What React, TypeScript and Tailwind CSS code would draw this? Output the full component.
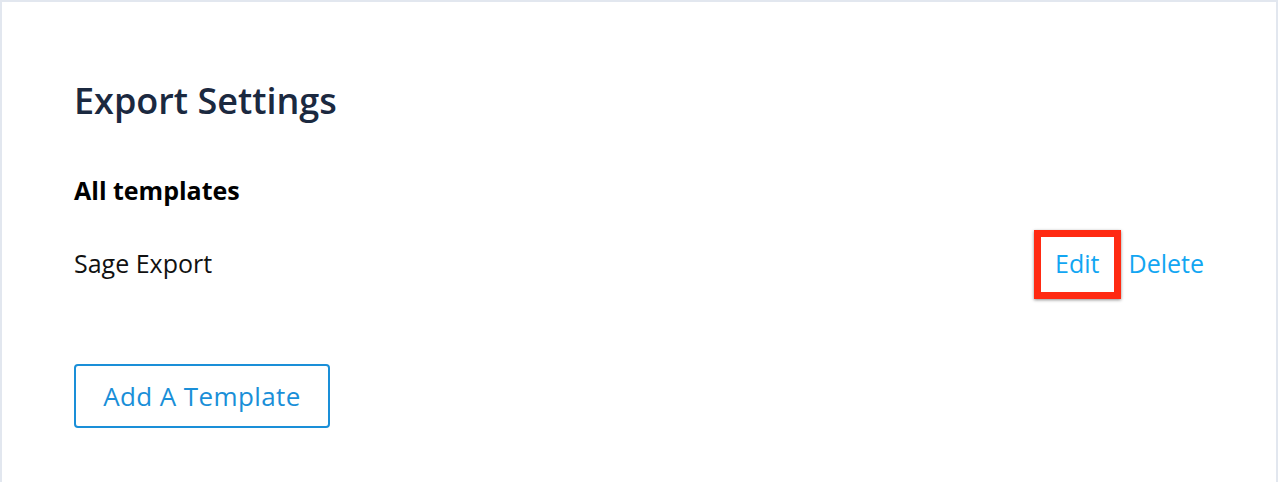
import React from 'react';

export default function App() {
  return (
    <div
      className="h-[482px] w-[1278px] bg-[#e2e7ef] pt-[2px] pl-[2px] pr-[2px] overflow-hidden"
      style={{ fontFamily: '"Open Sans", "Liberation Sans", sans-serif' }}
    >
      <div className="h-full bg-white pl-[72px] pr-[72px] pt-[77px]">
        <h1 className="text-[36px] leading-[44px] font-semibold text-[#1b2940]">Export Settings</h1>

        <h2 className="mt-[52px] text-[25px] leading-[30px] font-bold text-black">All templates</h2>

        <div className="mt-[43px] flex items-center justify-between">
          <span className="text-[25px] leading-[30px] text-[#111]">Sage Export</span>
          <div className="flex items-center gap-[29px] text-[25px] leading-[30px] text-[#12a6f2]">
            <span className="relative">
              Edit
              <span className="absolute -left-[21px] -top-[18px] h-[69px] w-[87px] border-[7px] border-[#ff2a12] shadow-[0_1px_3px_rgba(0,0,0,0.45)]" />
            </span>
            <span>Delete</span>
          </div>
        </div>

        <button className="mt-[86px] h-[64px] w-[256px] rounded-[4px] border-2 border-[#1a8fd8] text-[26px] text-[#1a8fd8] tracking-[0.4px]">
          Add A Template
        </button>
      </div>
    </div>
  );
}
